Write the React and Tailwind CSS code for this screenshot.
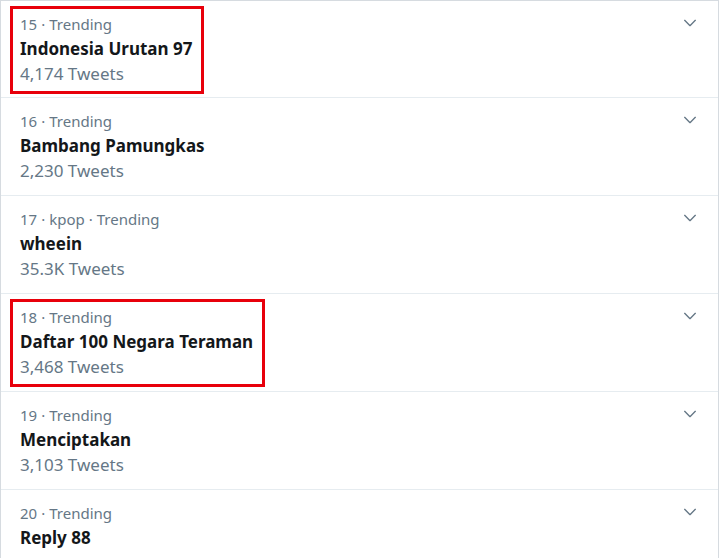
import React from "react";

const trends = [
  { rank: 15, meta: ["Trending"], name: "Indonesia Urutan 97", count: "4,174 Tweets", marked: true },
  { rank: 16, meta: ["Trending"], name: "Bambang Pamungkas", count: "2,230 Tweets" },
  { rank: 17, meta: ["kpop", "Trending"], name: "wheein", count: "35.3K Tweets" },
  { rank: 18, meta: ["Trending"], name: "Daftar 100 Negara Teraman", count: "3,468 Tweets", marked: true },
  { rank: 19, meta: ["Trending"], name: "Menciptakan", count: "3,103 Tweets" },
  { rank: 20, meta: ["Trending"], name: "Reply 88", count: null },
];

function Chevron() {
  return (
    <svg width="16" height="16" viewBox="0 0 24 24" className="text-[#657786]">
      <path d="M4 8l8 8 8-8" fill="none" stroke="currentColor" strokeWidth="2" strokeLinecap="round" strokeLinejoin="round" />
    </svg>
  );
}

function TrendRow({ trend, first }) {
  return (
    <div
      className={
        "flex justify-between border-b border-[#e6ecf0] pl-[19px] pr-[20px] pt-3 " +
        (first ? "h-[97px]" : "h-[98px]")
      }
    >
      <div className="relative w-fit h-fit">
        {trend.marked && (
          <div className="absolute -left-[10px] -top-[7px] -right-[12px] -bottom-[8px] border-[3px] border-[#e8000b]" />
        )}
        <div className="text-[15px] leading-[23px] text-[#657786]">
          {[trend.rank, ...trend.meta].map((part, i) => (
            <span key={i}>
              {i > 0 && <span className="mx-[4px]">·</span>}
              {part}
            </span>
          ))}
        </div>
        <div className="text-[17px] leading-[25px] font-bold text-[#14171a]">{trend.name}</div>
        {trend.count && (
          <div className="text-[17px] leading-[25px] text-[#657786]">{trend.count}</div>
        )}
      </div>
      <div className="pt-[2px]">
        <Chevron />
      </div>
    </div>
  );
}

export default function App() {
  return (
    <div className="w-[720px] h-[558px] overflow-hidden bg-white" style={{ fontFamily: '"Noto Sans", "Open Sans", sans-serif' }}>
      <div className="w-[719px] border-l border-r border-t border-[#d6dbe0]">
        {trends.map((t, i) => (
          <TrendRow key={t.rank} trend={t} first={i === 0} />
        ))}
      </div>
    </div>
  );
}
